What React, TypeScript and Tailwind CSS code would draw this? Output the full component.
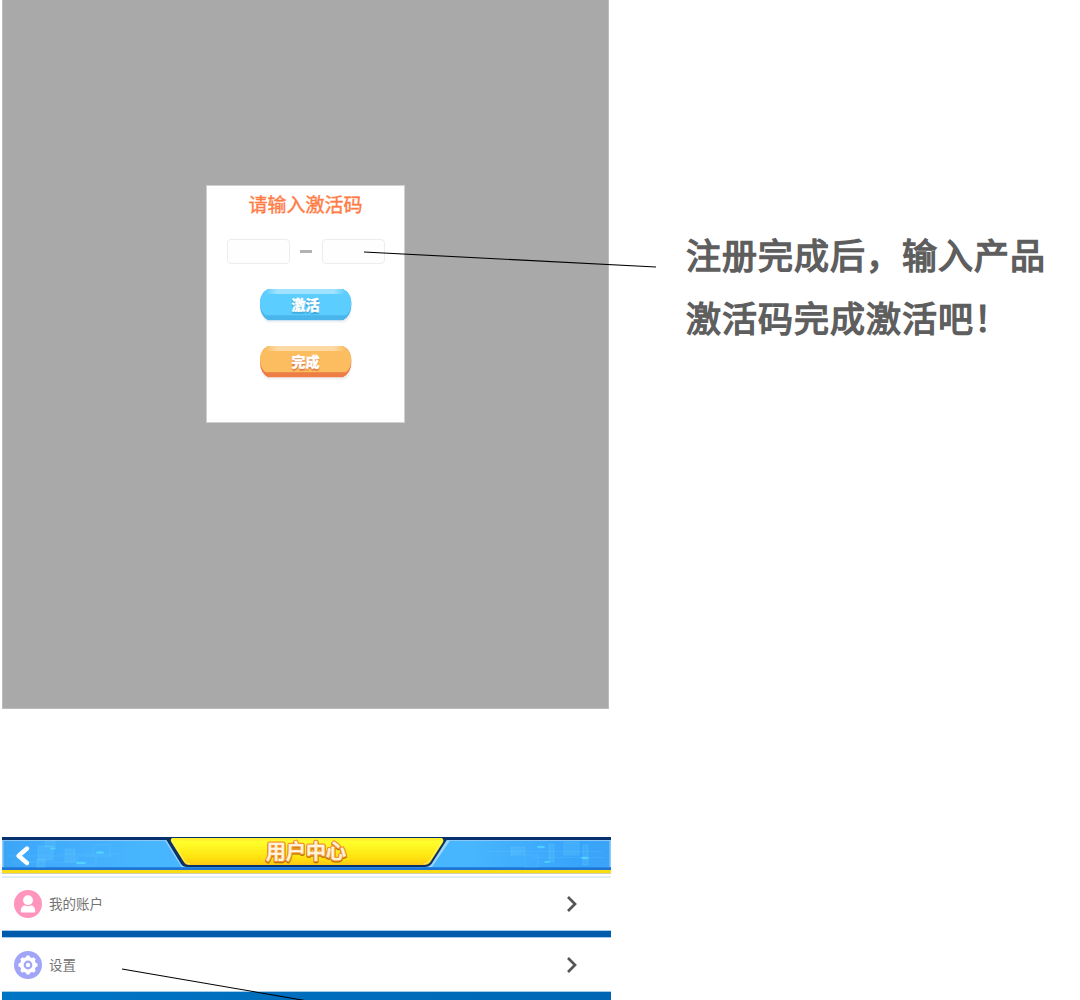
import React from "react";

const fontStack = "font-['Noto_Sans_CJK_SC','Noto_Sans',sans-serif]";

function GlossyButton({ label, tone }: { label: string; tone: "blue" | "orange" }) {
  const blue = tone === "blue";
  const id = `gloss-${tone}`;
  return (
    <button className="relative flex h-[35px] w-[94px] items-center justify-center">
      <svg className="absolute inset-0" width="94" height="35" viewBox="0 0 94 35" fill="none">
        <defs>
          <linearGradient id={id} x1="0" y1="0" x2="1" y2="0">
            <stop offset="0" stopColor="#fff" stopOpacity="0" />
            <stop offset=".15" stopColor="#fff" stopOpacity=".42" />
            <stop offset=".85" stopColor="#fff" stopOpacity=".42" />
            <stop offset="1" stopColor="#fff" stopOpacity="0" />
          </linearGradient>
        </defs>
        <path d="M10 2H84Q93 5 93 17Q93 30 86 34.500H8Q1 30 1 17Q1 5 10 2Z" fill="#f1f2f4" />
        <path d="M9 1H84Q92.300 5 92.300 17Q92.300 28 84 32.300H9Q1 28 1 17Q1 5 9 1Z" fill={blue ? "#49b5ea" : "#ed7c45"} />
        <path d="M9 1H84Q92.300 5 92.300 14Q92.300 23 87 27.300H6.500Q1 23 1 14Q1 5 9 1Z" fill={blue ? "#5bcdff" : "#fcbd60"} />
        <path d="M9 1H84L87 3.500Q86 6 82 6H11Q7 6 6 3.500Z" fill={`url(#${id})`} />
      </svg>
      <span
        className={
          "relative -top-[2px] text-[14px] leading-[20px] font-black text-white [-webkit-text-stroke:0.3px_white] " +
          (blue ? "[text-shadow:0_1px_0_#39a5d8,0_1.5px_1px_#39a5d8]" : "[text-shadow:0_1px_0_#df8140,0_1.5px_1px_#df8140]")
        }
      >
        {label}
      </span>
    </button>
  );
}

function ActivationPanel() {
  return (
    <section className="flex h-[709px] w-[607px] justify-center border-r border-b border-l border-[#bcbcbc] bg-[#a9a9a9]">
      <div className="mt-[185px] flex h-[238px] w-[199px] flex-col items-center border border-[#d0d0d0] bg-white">
        <h1 className="mt-[5px] text-[19px] leading-[26px] font-normal text-[#ff7b44] [-webkit-text-stroke:0.4px_#ff7b44]">请输入激活码</h1>
        <div className="mt-[22px] flex items-center">
          <div className="h-[25px] w-[63px] rounded-[4px] border border-[#ededed] bg-[#fefefe]" />
          <div className="mx-[10px] h-[3px] w-[12px] bg-[#b3b3b3]" />
          <div className="h-[25px] w-[63px] rounded-[4px] border border-[#ededed] bg-[#fefefe]" />
        </div>
        <div className="mt-[24px] flex flex-col gap-[22px]">
          <GlossyButton label="激活" tone="blue" />
          <GlossyButton label="完成" tone="orange" />
        </div>
      </div>
    </section>
  );
}

function HeaderArt() {
  return (
    <svg className="absolute inset-0 overflow-visible" width="609" height="41" viewBox="0 0 609 41">
      <defs>
        <linearGradient id="bar" x1="0" y1="0" x2="1" y2="0">
          <stop offset="0" stopColor="#3ca4f5" />
          <stop offset=".05" stopColor="#3faafc" />
          <stop offset=".23" stopColor="#48b5ff" />
          <stop offset=".77" stopColor="#48b5ff" />
          <stop offset=".95" stopColor="#37a4fb" />
          <stop offset="1" stopColor="#3ca4f5" />
        </linearGradient>
        <linearGradient id="gold" x1="0" y1="0" x2="0" y2="1">
          <stop offset="0" stopColor="#ffec32" />
          <stop offset=".15" stopColor="#ffff2b" />
          <stop offset=".75" stopColor="#ffe10e" />
          <stop offset="1" stopColor="#ffc715" />
        </linearGradient>
      </defs>
      <rect width="609" height="3" fill="#06316d" />
      <rect y="3" width="609" height="27" fill="url(#bar)" />
      <rect y="3" width="609" height="1" fill="#87c8f7" />
      <rect y="30" width="609" height="1" fill="#2684e4" />
      <rect y="31" width="609" height="2" fill="#2074d2" />
      <rect y="33" width="609" height="3" fill="#f8de12" />
      <rect y="36" width="609" height="1" fill="#d0cab8" />
      <rect y="37" width="609" height="2" fill="#fff" />
      <rect y="39" width="609" height="2" fill="#e3edf8" />
      <rect x="0" y="4" width="1.500" height="26" fill="#8bcef9" />
      <rect x="607.500" y="4" width="1.500" height="26" fill="#8bcef9" />
      <g fill="#7ce2ff" fillOpacity=".14" stroke="#80e4ff" strokeOpacity=".18">
        <rect x="36" y="9" width="15" height="14" />
        <rect x="43" y="4" width="10" height="6" />
        <rect x="63" y="12" width="10" height="13" />
        <rect x="35" y="22" width="8" height="8" />
        <rect x="75" y="19" width="19" height="10" fill="none" />
        <rect x="91" y="8" width="17" height="11" fill="none" />
        <path d="M4 19H60M10 25H85M57 17H115M485 14.500H600M530 20.500H603" strokeOpacity=".12" />
        <rect x="509" y="10" width="14" height="8" />
        <rect x="523" y="18" width="13" height="12" fill="none" />
        <rect x="547" y="7" width="5" height="18" />
        <rect x="562" y="5" width="15" height="13" />
        <rect x="581" y="8" width="5" height="20" />
      </g>
      <g fill="#5de8ff" fillOpacity=".6">
        <ellipse cx="51" cy="11.500" rx="3" ry="1" />
        <ellipse cx="98" cy="15.500" rx="4" ry="1.200" />
        <ellipse cx="79" cy="26" rx="5" ry="1.200" />
        <ellipse cx="539" cy="10" rx="4" ry="1.200" />
        <ellipse cx="545" cy="25" rx="3" ry="1" />
        <ellipse cx="583" cy="21" rx="4" ry="1.200" />
      </g>
      <path d="M163 3.500L179.500 30H430L448 3.500Z" fill="#9bd5f8" />
      <path d="M163 1L165 4L179 27Q181 30 185 30H423Q427 30 429.500 27L443.500 5L446 1Z" fill="#093268" />
      <path d="M170 1H440Q442.500 3 440.500 6L429 24Q427 28 422 28H187Q183.500 28 181.500 24.500L170 6Q167.500 2.500 170 1Z" fill="url(#gold)" />
      <path d="M170.500 4L182.500 24Q184 26.500 188 27M439.500 4L428 23.500Q426 26.500 422 27" stroke="#fff36d" strokeWidth="1" fill="none" />
      <path d="M25 11.500L16.500 18.800L25 26" fill="none" stroke="#fff" strokeWidth="4.400" strokeLinecap="round" strokeLinejoin="round" />
      <text
        x="304" y="22.500" textAnchor="middle" fontSize="20" fontWeight="500"
        stroke="#a96a05" strokeWidth="3" strokeLinejoin="round" fill="#a96a05" aria-hidden="true"
      >用户中心</text>
      <text
        x="304" y="21.500" textAnchor="middle" fontSize="20" fontWeight="500"
        stroke="#f39331" strokeWidth="3" strokeLinejoin="round" fill="#f39331" aria-hidden="true"
      >用户中心</text>
      <text
        x="304" y="21.500" textAnchor="middle" fontSize="20" fontWeight="500"
        stroke="#fff5df" strokeWidth=".6" strokeLinejoin="round" fill="#fff5df"
      >用户中心</text>
    </svg>
  );
}

function UserIcon() {
  return (
    <svg width="28" height="28" viewBox="0 0 28 28">
      <circle cx="14" cy="14" r="14" fill="#ff94bd" />
      <circle cx="14" cy="10.200" r="4.900" fill="#fff" />
      <path d="M6.700 21.200C6.700 17.500 9 15.500 11 15.500Q14 17 17 15.500C19 15.500 21.300 17.500 21.300 21.200Q21.300 22.500 20.200 22.500H7.800Q6.700 22.500 6.700 21.200Z" fill="#fff" />
    </svg>
  );
}

function SettingsIcon() {
  return (
    <svg width="28" height="28" viewBox="0 0 28 28">
      <circle cx="14" cy="14" r="14" fill="#a0a5f7" />
      <g fill="#fff">
        <circle cx="14" cy="14" r="8" />
        {[0, 45, 90, 135, 180, 225, 270, 315].map((angle) => (
          <path key={angle} d="M11.500 8L12.600 4.500H15.400L16.500 8Z" transform={`rotate(${angle} 14 14)`} />
        ))}
      </g>
      <circle cx="14" cy="14" r="3.300" fill="none" stroke="#a0a5f7" strokeWidth="2.200" />
    </svg>
  );
}

function MenuRow({ label, icon }: { label: string; icon: React.ReactNode }) {
  return (
    <div className="flex h-[53px] items-center bg-white pl-[12px]">
      {icon}
      <span className="mb-[2px] ml-[7px] text-[13.5px] leading-[20px] text-[#737373]">{label}</span>
      <svg className="mr-[32px] ml-auto" width="14" height="18" viewBox="0 0 14 18" fill="none">
        <path d="M3 2L10 9L3 16" stroke="#555" strokeWidth="2.700" />
      </svg>
    </div>
  );
}

function UserCenter() {
  return (
    <section className="mt-[128px] h-[163px] w-[609px] bg-white">
      <header className="relative -mb-px h-[41px]"><HeaderArt /></header>
      <MenuRow label="我的账户" icon={<UserIcon />} />
      <div className="h-[8px] border-y border-[#a3cce8] bg-[#005bac]" />
      <MenuRow label="设置" icon={<SettingsIcon />} />
      <div className="h-[9px] border-t border-[#a3cce8] bg-linear-to-r from-[#0075c4] to-[#0066b4]" />
    </section>
  );
}

export default function App() {
  return (
    <main className={`relative flex h-[1000px] w-[1080px] overflow-hidden bg-white pl-[2px] ${fontStack}`}>
      <div className="w-[609px] shrink-0">
        <ActivationPanel />
        <UserCenter />
      </div>
      <p className="mt-[222px] ml-[75px] text-[35px] leading-[63px] font-normal tracking-[1px] whitespace-nowrap text-[#5e5e5e] [-webkit-text-stroke:1.4px_#5e5e5e]">
        注册完成后，输入产品
        <br />
        激活码完成激活吧！
      </p>
      <svg className="pointer-events-none absolute inset-0" width="1080" height="1000" fill="none" stroke="#000" strokeWidth="1.100">
        <path d="M364 252L656 267M122 969L305 1000.500" />
      </svg>
    </main>
  );
}
